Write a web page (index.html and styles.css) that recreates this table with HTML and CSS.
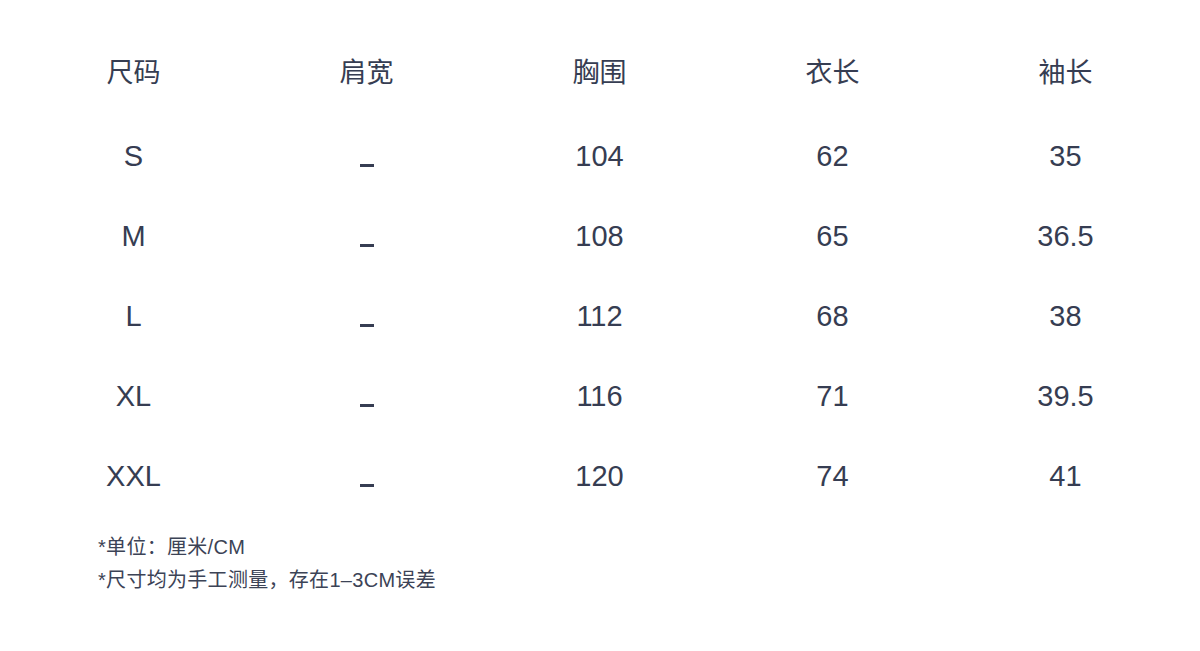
FILE: index.html
```html
<!DOCTYPE html>
<html lang="zh">
<head>
<meta charset="utf-8">
<link rel="stylesheet" href="styles.css">
</head>
<body>
<div class="page">
  <div class="table">
    <div class="row head">
      <div class="cell">尺码</div><div class="cell">肩宽</div><div class="cell">胸围</div><div class="cell">衣长</div><div class="cell">袖长</div>
    </div>
    <div class="row">
      <div class="cell">S</div><div class="cell"><span class="dash">_</span></div><div class="cell">104</div><div class="cell">62</div><div class="cell">35</div>
    </div>
    <div class="row">
      <div class="cell">M</div><div class="cell"><span class="dash">_</span></div><div class="cell">108</div><div class="cell">65</div><div class="cell">36.5</div>
    </div>
    <div class="row">
      <div class="cell">L</div><div class="cell"><span class="dash">_</span></div><div class="cell">112</div><div class="cell">68</div><div class="cell">38</div>
    </div>
    <div class="row">
      <div class="cell">XL</div><div class="cell"><span class="dash">_</span></div><div class="cell">116</div><div class="cell">71</div><div class="cell">39.5</div>
    </div>
    <div class="row">
      <div class="cell">XXL</div><div class="cell"><span class="dash">_</span></div><div class="cell">120</div><div class="cell">74</div><div class="cell">41</div>
    </div>
  </div>
  <div class="notes">
    <p>*单位：厘米/CM</p>
    <p>*尺寸均为手工测量，存在1–3CM误差</p>
  </div>
</div>
</body>
</html>
```
FILE: styles.css
```css
html, body {
  margin: 0;
  padding: 0;
  background: #ffffff;
}
body {
  font-family: "Liberation Sans", "Noto Sans CJK SC", sans-serif;
  color: #363d52;
}
.page {
  width: 1200px;
  height: 651px;
  box-sizing: border-box;
  padding-top: 51px;
  padding-left: 17px;
}
.table {
  display: flex;
  flex-direction: column;
}
.row {
  display: grid;
  grid-template-columns: repeat(5, 233px);
  align-items: center;
  font-size: 29px;
}
.row.head {
  height: 40px;
  margin-bottom: 45px;
  font-family: "Noto Sans CJK SC", sans-serif;
  font-size: 27px;
}
.cell {
  text-align: center;
  line-height: 40px;
  height: 40px;
}
.row:not(.head) {
  height: 40px;
  margin-bottom: 40px;
}
.dash {
  display: inline-block;
  width: 14px;
  height: 3px;
  background: #363d52;
  color: transparent;
  overflow: hidden;
  line-height: 3px;
  font-size: 3px;
  vertical-align: middle;
  position: relative;
  top: 7px;
}
.notes {
  margin-top: -5px;
  padding-left: 81px;
  font-family: "Liberation Sans", "Noto Sans CJK SC", sans-serif;
  font-size: 20px;
  letter-spacing: 0.3px;
  color: #3c4356;
}
.notes p {
  margin: 0;
  line-height: 33px;
}
```
